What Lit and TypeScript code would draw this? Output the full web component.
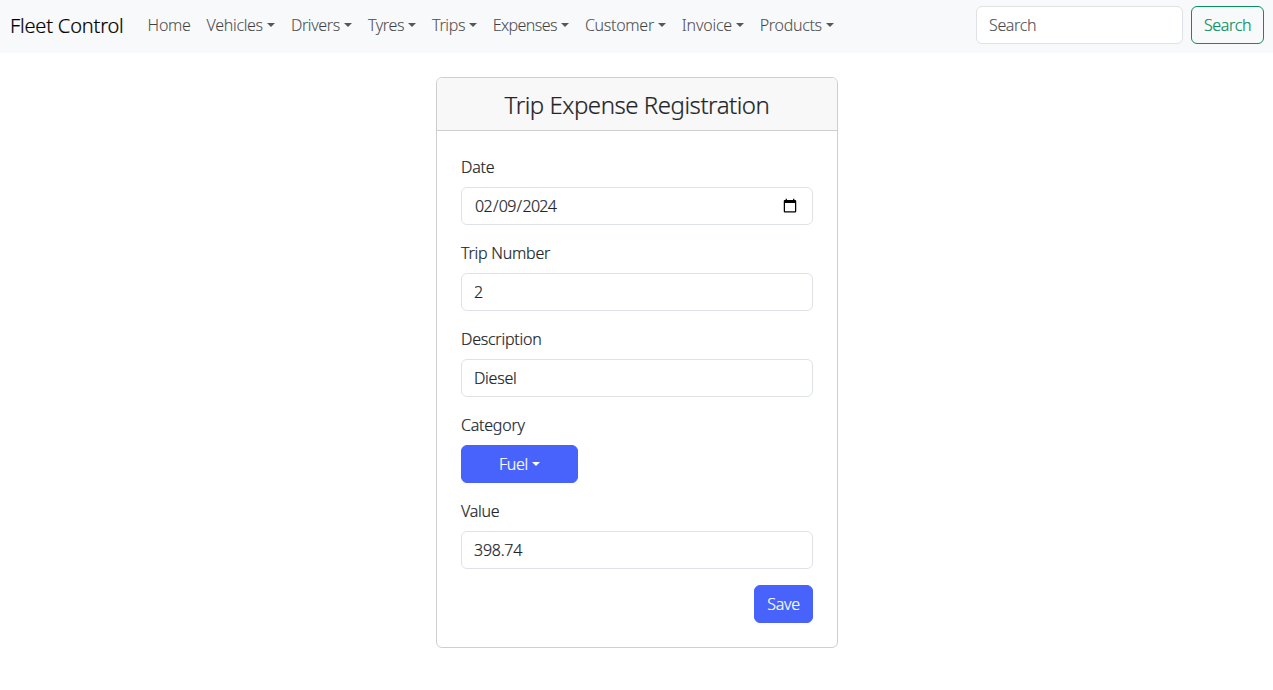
import { LitElement, html, css } from "lit";
import { customElement } from "lit/decorators.js";
import { styleMap } from "lit/directives/style-map.js";

interface NavItem {
  label: string;
  width: number;
  tracking: number;
  menu: boolean;
}

const NAV: NavItem[] = [
  { label: "Home", width: 59, tracking: -0.29, menu: false },
  { label: "Vehicles", width: 84.3, tracking: -0.32, menu: true },
  { label: "Drivers", width: 77.1, tracking: -0.36, menu: true },
  { label: "Tyres", width: 64.1, tracking: -0.4, menu: true },
  { label: "Trips", width: 60.7, tracking: -0.36, menu: true },
  { label: "Expenses", width: 92.2, tracking: -0.58, menu: true },
  { label: "Customer", width: 96.9, tracking: -0.3, menu: true },
  { label: "Invoice", width: 77.9, tracking: -0.23, menu: true },
  { label: "Products", width: 90, tracking: -0.31, menu: true },
];

@customElement("app-root")
class AppRoot extends LitElement {
  static styles = css`
    :host {
      display: block;
      min-height: 690px;
      background: #fff;
      color: #212529;
      font: 300 16px/24px "Noto Sans", "Open Sans", sans-serif;
      -webkit-text-stroke: 0.2px currentColor;
    }
    * { box-sizing: border-box; }
    .navbar {
      display: flex;
      align-items: center;
      height: 53px;
      padding: 6px 9px 9px 10px;
      background: #f8f9fb;
    }
    .brand {
      width: 113.6px;
      margin-right: 16px;
      padding-top: 2px;
      font-size: 20px;
      line-height: 30px;
      letter-spacing: -0.17px;
      color: #000;
      white-space: nowrap;
      text-decoration: none;
    }
    .links { display: flex; flex: 1; }
    .link {
      display: flex;
      align-items: center;
      justify-content: space-between;
      padding: 0 8px;
      color: rgba(0, 0, 0, 0.65);
      text-decoration: none;
      white-space: nowrap;
    }
    .caret {
      width: 8px;
      height: 4px;
      border: 4px solid transparent;
      border-top-color: currentColor;
      border-bottom: 0;
    }
    .search { display: flex; gap: 8px; }
    input, button {
      display: block;
      height: 38px;
      margin: 0;
      padding: 6px 12px;
      border: 1px solid #dee2e6;
      border-radius: 6px;
      background: #fff;
      color: #212529;
      font: inherit;
      letter-spacing: -0.26px;
    }
    input { width: 100%; }
    input[type="date"] { letter-spacing: -0.7px; }
    input::placeholder { color: rgba(33, 37, 41, 0.75); opacity: 1; }
    .search input { width: 207px; letter-spacing: -0.36px; }
    .outline {
      width: 73px;
      padding: 6px 0;
      background: transparent;
      border-color: #0a8f5f;
      color: #0a8f5f;
      letter-spacing: -0.36px;
    }
    .card {
      width: 402px;
      margin: 24px auto 0 calc(50% - 200.5px);
      border: 1px solid #cfcfcf;
      border-radius: 6px;
      overflow: hidden;
    }
    .title {
      margin: 0;
      padding: 9px 0 7px;
      font-size: 24px;
      line-height: 36px;
      font-weight: 300;
      letter-spacing: -0.46px;
      text-align: center;
      background: #f8f8f8;
      border-bottom: 1px solid #cfcfcf;
    }
    .form {
      display: flex;
      flex-direction: column;
      gap: 16px;
      padding: 24px;
    }
    .field { display: grid; gap: 8px; letter-spacing: -0.24px; }
    .primary {
      display: flex;
      align-items: center;
      justify-content: center;
      gap: 4px;
      background: #4763fb;
      border-color: #4763fb;
      color: #fff;
    }
    .category { width: 117px; }
    .save { width: 59px; align-self: flex-end; }
  `;

  private field(label: string, value: string, type = "text") {
    return html`<label class="field"><span>${label}</span><input type=${type} .value=${value} /></label>`;
  }

  render() {
    return html`
      <nav class="navbar">
        <a class="brand">Fleet Control</a>
        <div class="links">
          ${NAV.map(
            (n) => html`<a class="link" style=${styleMap({ width: `${n.width}px`, letterSpacing: `${n.tracking}px` })}
              ><span>${n.label}</span>${n.menu ? html`<i class="caret"></i>` : ""}</a>`
          )}
        </div>
        <div class="search">
          <input type="text" placeholder="Search" />
          <button class="outline">Search</button>
        </div>
      </nav>
      <section class="card">
        <h4 class="title">Trip Expense Registration</h4>
        <div class="form">
          ${this.field("Date", "2024-02-09", "date")}
          ${this.field("Trip Number", "2")}
          ${this.field("Description", "Diesel")}
          <div class="field">
            <span>Category</span>
            <button class="primary category">Fuel<i class="caret"></i></button>
          </div>
          ${this.field("Value", "398.74")}
          <button class="primary save">Save</button>
        </div>
      </section>
    `;
  }
}
